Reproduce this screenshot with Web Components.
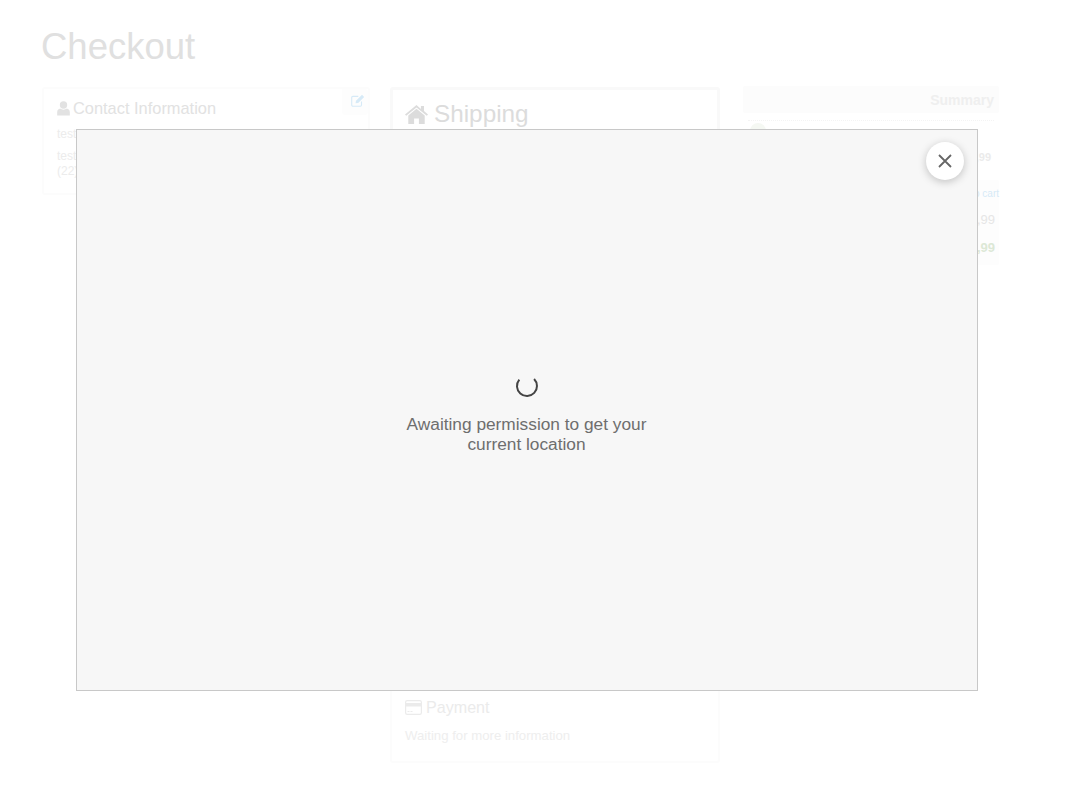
<!DOCTYPE html>
<html lang="en"><head><meta charset="utf-8"><title>Checkout</title>
<style>
html,body{margin:0;padding:0;background:#fff}
body{font-family:"Liberation Sans",Arial,sans-serif;width:1070px;height:802px;overflow:hidden;position:relative}
</style></head><body>
<checkout-page>
  <checkout-card slot="left" style="--h:108px;--bc:#fcfcfc;--bw:2px">
    <card-title slot="title" style="--fs:16.400px;--col:#e2e2e2;--gap:3px;--pad:10px 0 0 13px;--lh:18px"><svg slot="icon" width="13" height="15" viewBox="0 0 13 15"><circle cx="6.500" cy="4" r="3.700" fill="#e2e2e2"/><path d="M.2 14.600V11C.2 9 1.800 8 3.200 7.600c1 .8 2 1.100 3.300 1.100s2.300-.3 3.300-1.100c1.400.4 3 1.400 3 3.400v3.600z" fill="#e2e2e2"/></svg>Contact Information</card-title>
    <edit-button></edit-button>
    <div style="color:#ececec;font-size:12px;line-height:15px;padding:10px 0 0 13px">test<br><span style="display:block;margin-top:7px">test<br>(22)</span></div>
  </checkout-card>
  <div slot="center" style="display:flex;flex-direction:column">
    <checkout-card style="--h:590px;--bc:#f9f9f9;--bw:3px">
      <card-title slot="title" style="--fs:24.300px;--col:#dcdcdc;--gap:6px;--pad:10px 0 0 12px;--lh:28px"><svg slot="icon" width="23" height="19" viewBox="0 0 23 19"><path d="M11.500 0 0 9.400l1.200 1.400L11.500 2.400l10.300 8.400 1.200-1.400-4-3.300V1h-3.100v2.900z" fill="#dcdcdc"/><path d="M11.500 3.800 3.300 10.500V19h5.800v-5.600h4.800V19h5.800v-8.500z" fill="#dcdcdc"/></svg>Shipping</card-title>
    </checkout-card>
    <checkout-card style="--h:86px;--bc:#fcfcfc;--bw:2px">
      <card-title slot="title" style="--fs:16.100px;--col:#ebebeb;--gap:4px;--pad:19px 0 0 13px;--lh:18px"><svg slot="icon" width="17" height="15" viewBox="0 0 17 15"><rect x=".6" y=".6" width="15.800" height="13.800" rx="1.600" fill="none" stroke="#ebebeb" stroke-width="1.200"/><rect x="1" y="3" width="15" height="3.500" fill="#ebebeb"/><path d="M2.500 11.500h2M5.500 11.500h2" stroke="#ebebeb"/></svg>Payment</card-title>
      <div style="color:#eeeeee;font-size:13.200px;line-height:15px;padding:12px 0 0 13px">Waiting for more information</div>
    </checkout-card>
  </div>
  <checkout-summary slot="right"></checkout-summary>
</checkout-page>
<location-dialog>Awaiting permission to get your<br>current location</location-dialog>
<script>
function def(name,html){customElements.define(name,class extends HTMLElement{constructor(){super();this.attachShadow({mode:"open"}).innerHTML=html}})}
def("checkout-page",`<style>
:host{display:block;padding:28px 0 0 41px}
h1{margin:0;font:400 36.500px/38px "Liberation Sans",Arial,sans-serif;color:#e0e0e0}
.cols{display:flex;align-items:flex-start;margin-top:21px}
.l{width:328px;margin-left:1px}.c{width:330px;margin-left:20px}.r{width:256px;margin-left:23px;margin-top:-1px}
</style><h1>Checkout</h1><div class="cols"><div class="l"><slot name="left"></slot></div><div class="c"><slot name="center"></slot></div><div class="r"><slot name="right"></slot></div></div>`);
def("checkout-card",`<style>
:host{display:block;box-sizing:border-box;height:var(--h);border:var(--bw,2px) solid var(--bc,#fafafa);border-radius:3px;position:relative}
</style><slot name="title"></slot><slot></slot>`);
def("card-title",`<style>
:host{display:flex;align-items:center;gap:var(--gap);padding:var(--pad);line-height:var(--lh);font-size:var(--fs);color:var(--col)}
</style><slot name="icon"></slot><span><slot></slot></span>`);
def("edit-button",`<style>
:host{position:absolute;top:0;right:0;width:26px;height:26px;background:#fdfdfd;border-radius:0 3px 3px 3px;display:flex;align-items:center;justify-content:center}
svg{margin:-4px -5px 0 0}
</style><svg width="14" height="13" viewBox="0 0 14 13"><path d="M10.500 7.500V11a1.200 1.200 0 0 1-1.200 1.200H1.900A1.200 1.200 0 0 1 .7 11V3.600a1.200 1.200 0 0 1 1.200-1.200h5.400" fill="none" stroke="#d6eaf7" stroke-width="1.100"/><path d="M4.500 9.300 5 6.700 11 .7l2.200 2.200-6 6z" fill="#d6eaf7"/></svg>`);
def("checkout-summary",`<style>
:host{display:block;font:12px/15px "Liberation Sans",Arial,sans-serif;height:179px;position:relative}
.h{height:27px;background:#fcfcfc;text-align:right;font:700 14px/28px "Liberation Sans",Arial,sans-serif;color:#efefef;padding-right:5px;border-radius:2px}
.dots{margin:7px 5px 0;border-top:1px dotted #f4f4f4}
.thumb{width:16px;height:16px;border-radius:50%;background:#f5f8f3;margin:2px 0 0 7px}
.row{display:flex;justify-content:flex-end;padding-right:4px}
.a{margin-top:11px;padding-right:8px;font-size:11px;font-weight:700;color:#ebebeb}
.box{margin-top:15px;background:#fdfdfd;height:85px;border-radius:2px}
.cart{text-align:right;font-size:10px;line-height:14px;color:#d6eaf7;padding-top:7px}
.b{margin-top:11px;color:#e6e6e6;font-size:13px}
.t{margin-top:13px;color:#dce8d6;font-weight:700;font-size:13px}
</style><div class="h">Summary</div><div class="dots"></div><div class="thumb"></div><div class="row a">R$ 0,99</div>
<div class="box"><div class="cart">Go to cart</div><div class="row b">R$ 0,99</div><div class="row t">R$ 0,99</div></div>`);
def("location-dialog",`<style>
:host{position:absolute;left:76px;top:129px;width:902px;height:562px;box-sizing:border-box;background:#f7f7f7;border:1px solid #c8c8c8;display:flex;flex-direction:column;align-items:center;justify-content:center;color:#6e6e6e;font:17.300px/20px "Liberation Sans",Arial,sans-serif;text-align:center}
.inner{display:flex;flex-direction:column;align-items:center;gap:16px;margin-top:7px}
.msg{margin-right:1px}
svg{display:block}
button{position:absolute;top:12px;right:13px;width:38px;height:38px;border:0;padding:0;border-radius:50%;background:#fff;box-shadow:0 2px 8px rgba(0,0,0,.22);display:flex;align-items:center;justify-content:center}
</style><button aria-label="Close"><svg width="14" height="14" viewBox="0 0 14 14"><path d="M1 1l12 12M13 1 1 13" stroke="#666" stroke-width="1.800" fill="none"/></svg></button>
<div class="inner"><svg width="24" height="24" viewBox="0 0 24 24"><path d="M4.300 5.600A10 10 0 1 0 19.100 5" fill="none" stroke="#444" stroke-width="2"/></svg><div class="msg"><slot></slot></div></div>`);
</script></body></html>
